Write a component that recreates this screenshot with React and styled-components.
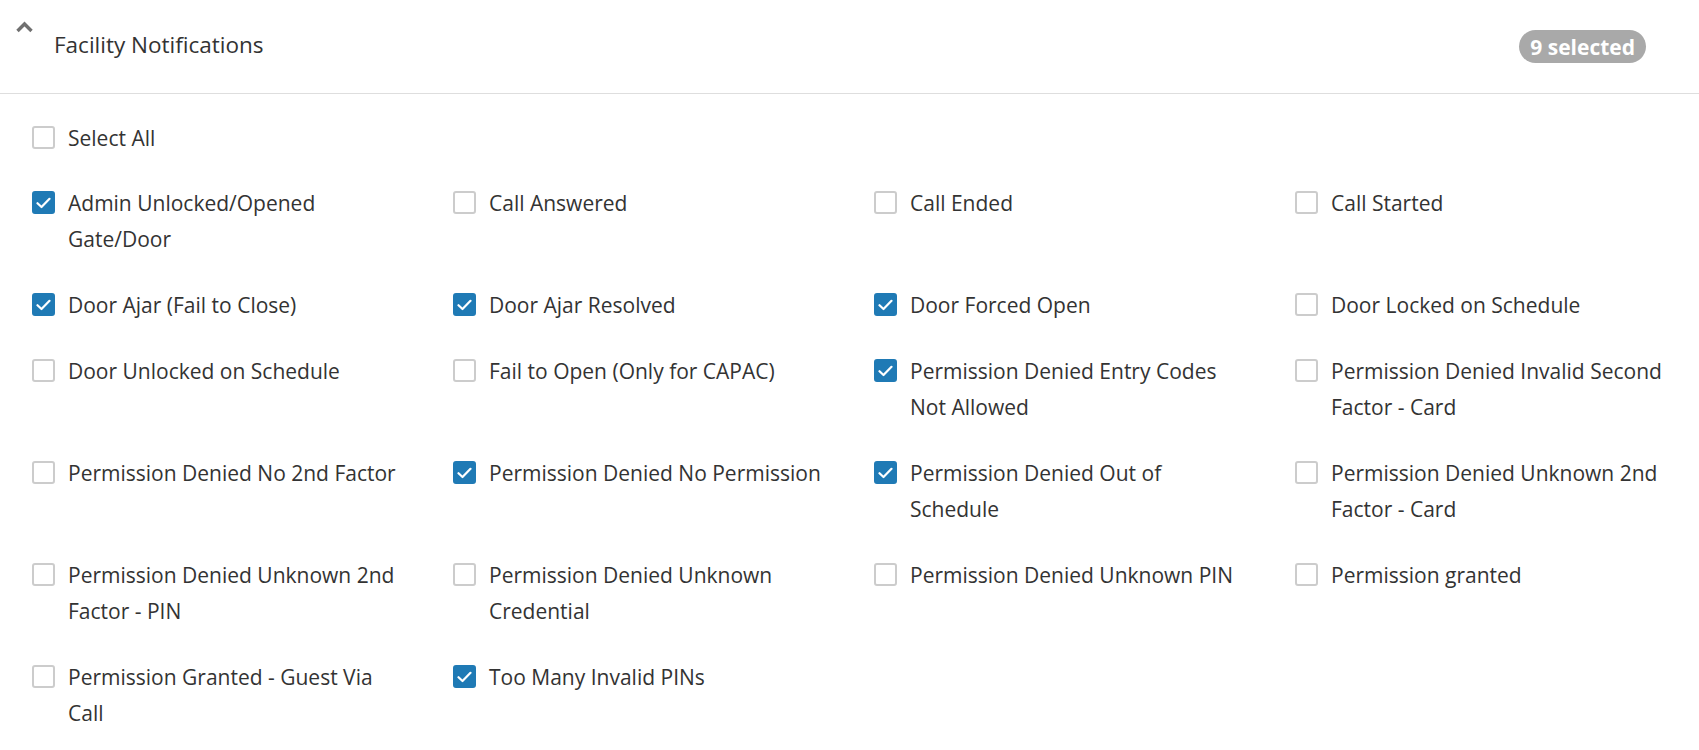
import React, { useState } from "react";
import styled, { createGlobalStyle } from "styled-components";

const GlobalStyle = createGlobalStyle`
  body {
    margin: 0;
    background: #fff;
    font-family: "Open Sans", "Noto Sans", sans-serif;
    color: #333;
  }
`;

const Panel = styled.section`
  width: 100%;
  background: #fff;
`;

const Header = styled.div`
  display: flex;
  align-items: center;
  height: 94px;
  padding: 0 53px 4px 15px;
  border-bottom: 1px solid #dedede;
  box-sizing: border-box;
  cursor: pointer;
`;

const Chevron = styled.svg`
  align-self: flex-start;
  margin-top: 20px;
  width: 19px;
  height: 13px;
  flex-shrink: 0;
`;

const Title = styled.h2`
  margin: 0 0 0 20px;
  font-size: 22.5px;
  font-weight: 400;
  color: #333;
  flex: 1;
`;

const Badge = styled.span`
  display: inline-flex;
  align-items: center;
  height: 33px;
  margin-top: 4px;
  padding: 0 11px;
  border-radius: 17px;
  background: #a9a9a9;
  color: #fff;
  font-size: 21px;
  font-weight: 700;
`;

const Body = styled.div`
  padding: 26px 32px 30px 32px;
`;

const SelectAllRow = styled.div`
  margin-bottom: 29px;
`;

const Grid = styled.div`
  display: grid;
  grid-template-columns: repeat(4, 1fr);
  column-gap: 49px;
  row-gap: 30px;
`;

const Option = styled.label`
  display: flex;
  align-items: flex-start;
  gap: 13px;
  font-size: 21px;
  line-height: 36px;
  color: #333;
  cursor: pointer;
`;

const Box = styled.span`
  flex-shrink: 0;
  width: 23px;
  height: 23px;
  margin-top: 6px;
  box-sizing: border-box;
  border-radius: 3px;
  border: 2.5px solid ${(p) => (p.checked ? "#1f7ab5" : "#cccccc")};
  background: ${(p) => (p.checked ? "#1f7ab5" : "#fff")};
  display: flex;
  align-items: center;
  justify-content: center;
`;

const Check = () => (
  <svg width="15" height="12" viewBox="0 0 15 12">
    <path
      d="M1.5 6.2 L5.5 10 L13.5 1.8"
      fill="none"
      stroke="#fff"
      strokeWidth="2.2"
      strokeLinecap="round"
      strokeLinejoin="round"
    />
  </svg>
);

const HIDDEN_SELECTED = 1;

const options = [
  ["Admin Unlocked/Opened Gate/Door", true],
  ["Call Answered", false],
  ["Call Ended", false],
  ["Call Started", false],
  ["Door Ajar (Fail to Close)", true],
  ["Door Ajar Resolved", true],
  ["Door Forced Open", true],
  ["Door Locked on Schedule", false],
  ["Door Unlocked on Schedule", false],
  ["Fail to Open (Only for CAPAC)", false],
  ["Permission Denied Entry Codes Not Allowed", true],
  ["Permission Denied Invalid Second Factor - Card", false],
  ["Permission Denied No 2nd Factor", false],
  ["Permission Denied No Permission", true],
  ["Permission Denied Out of Schedule", true],
  ["Permission Denied Unknown 2nd Factor - Card", false],
  ["Permission Denied Unknown 2nd Factor - PIN", false],
  ["Permission Denied Unknown Credential", false],
  ["Permission Denied Unknown PIN", false],
  ["Permission granted", false],
  ["Permission Granted - Guest Via Call", false],
  ["Too Many Invalid PINs", true],
];

const CheckItem = ({ label, checked, onToggle }) => (
  <Option onClick={onToggle}>
    <Box checked={checked}>{checked && <Check />}</Box>
    <span>{label}</span>
  </Option>
);

const App = () => {
  const [state, setState] = useState(options.map((o) => o[1]));
  const count = state.filter(Boolean).length;
  const allOn = count === state.length;

  const toggle = (i) =>
    setState((s) => s.map((v, j) => (j === i ? !v : v)));

  return (
    <>
      <GlobalStyle />
      <Panel>
        <Header>
          <Chevron viewBox="0 0 19 13">
            <path
              d="M2.5 11 L9.5 4 L16.5 11"
              fill="none"
              stroke="#707070"
              strokeWidth="3.4"
            />
          </Chevron>
          <Title>Facility Notifications</Title>
          <Badge>{count + HIDDEN_SELECTED} selected</Badge>
        </Header>
        <Body>
          <SelectAllRow>
            <CheckItem
              label="Select All"
              checked={allOn}
              onToggle={() => setState(state.map(() => !allOn))}
            />
          </SelectAllRow>
          <Grid>
            {options.map((o, i) => (
              <CheckItem
                key={o[0]}
                label={o[0]}
                checked={state[i]}
                onToggle={() => toggle(i)}
              />
            ))}
          </Grid>
        </Body>
      </Panel>
    </>
  );
};

export default App;
